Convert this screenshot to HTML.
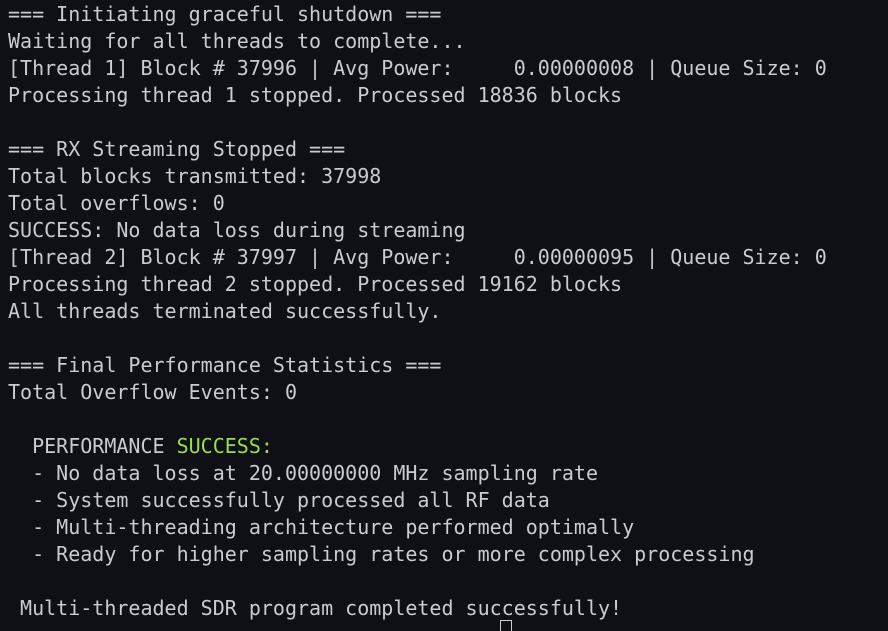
<!DOCTYPE html>
<html><head><style>
html,body{margin:0;padding:0;background:#0e1015;width:888px;height:625px;overflow:hidden}
pre{margin:0;position:absolute;left:8px;top:1px;font-family:"DejaVu Sans Mono","Liberation Mono",monospace;font-size:20px;line-height:27px;color:#c8ccd2;white-space:pre}
.g{color:#9fdd44}
.cur{position:absolute;left:500px;top:620px;width:10px;height:10px;border:1px solid #ccc;border-bottom:none}
</style></head><body>
<pre>=== Initiating graceful shutdown ===
Waiting for all threads to complete...
[Thread 1] Block # 37996 | Avg Power:     0.00000008 | Queue Size: 0
Processing thread 1 stopped. Processed 18836 blocks

=== RX Streaming Stopped ===
Total blocks transmitted: 37998
Total overflows: 0
SUCCESS: No data loss during streaming
[Thread 2] Block # 37997 | Avg Power:     0.00000095 | Queue Size: 0
Processing thread 2 stopped. Processed 19162 blocks
All threads terminated successfully.

=== Final Performance Statistics ===
Total Overflow Events: 0

  PERFORMANCE <span class="g">SUCCESS:</span>
  - No data loss at 20.00000000 MHz sampling rate
  - System successfully processed all RF data
  - Multi-threading architecture performed optimally
  - Ready for higher sampling rates or more complex processing

 Multi-threaded SDR program completed successfully!</pre>
<div class="cur"></div>
</body></html>
